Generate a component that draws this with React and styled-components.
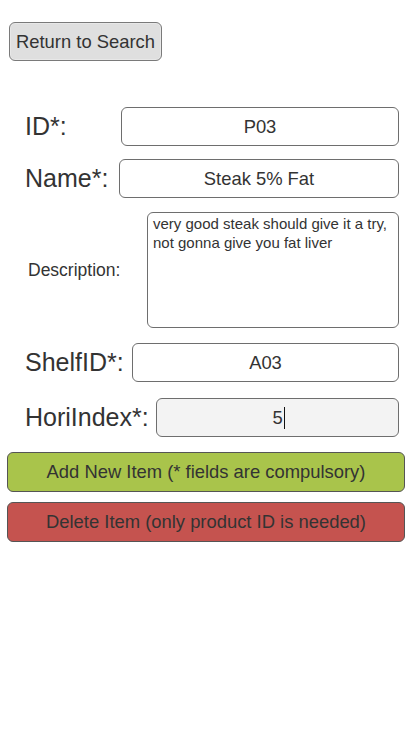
import React from "react";
import styled, { createGlobalStyle } from "styled-components";

const Global = createGlobalStyle`
  html, body { margin: 0; padding: 0; background: #ffffff; }
  body { font-family: "Liberation Sans", Arial, sans-serif; color: #333; }
`;

const Page = styled.div`
  width: 409px;
  min-height: 730px;
  display: flex;
  flex-direction: column;
  padding-top: 22px;
  box-sizing: border-box;
`;

const TopBar = styled.div`
  display: flex;
  padding-left: 9px;
`;

const ReturnButton = styled.button`
  height: 39px;
  width: 153px;
  padding: 0;
  font-family: "Liberation Sans", Arial, sans-serif;
  font-size: 18.4px;
  color: #333;
  background: #dfdfdf;
  border: 1px solid #7a7a7a;
  border-radius: 6px;
  box-shadow: inset 0 0 0 1px #e8e8e8;
`;

const Form = styled.div`
  display: flex;
  flex-direction: column;
  margin-top: 46px;
`;

const Row = styled.div`
  display: flex;
  align-items: center;
  padding-left: ${(p) => p.$indent || 25}px;
  padding-right: 10px;
  margin-top: ${(p) => p.$mt || 0}px;
`;

const Label = styled.label`
  flex: none;
  width: ${(p) => p.$w}px;
  font-size: ${(p) => (p.$small ? 17.5 : 25)}px;
  color: #333;
  white-space: nowrap;
`;

const FieldWrap = styled.div`
  flex: 1;
  min-width: 0;
  display: flex;
  position: relative;
`;

const TextInput = styled.input`
  flex: 1;
  min-width: 0;
  height: 39px;
  box-sizing: border-box;
  border: 1px solid #6e6e6e;
  border-radius: 6px;
  background: ${(p) => (p.$focused ? "#f3f3f3" : "#ffffff")};
  font-family: "Liberation Sans", Arial, sans-serif;
  font-size: 18.4px;
  color: #333;
  text-align: center;
  outline: none;
  padding: 0 6px;
  caret-color: transparent;
`;

const Caret = styled.span`
  position: absolute;
  left: calc(50% + 6px);
  top: 9px;
  width: 1px;
  height: 22px;
  background: #111;
  pointer-events: none;
`;

const TextArea = styled.textarea`
  flex: 1;
  min-width: 0;
  height: 116px;
  box-sizing: border-box;
  border: 1px solid #6e6e6e;
  border-radius: 6px;
  background: #fff;
  font-family: "Liberation Sans", Arial, sans-serif;
  font-size: 15px;
  line-height: 19px;
  color: #333;
  padding: 1px 5px;
  resize: none;
  outline: none;
`;

const Actions = styled.div`
  display: flex;
  flex-direction: column;
  gap: 10px;
  padding: 0 4px 0 7px;
  margin-top: 15px;
`;

const ActionButton = styled.button`
  height: 40px;
  width: 100%;
  padding: 0;
  font-family: "Liberation Sans", Arial, sans-serif;
  font-size: 18.4px;
  color: #333;
  background: ${(p) => (p.$variant === "danger" ? "#c5534f" : "#a9c44b")};
  border: 1px solid #555;
  border-radius: 6px;
`;

export default function App() {
  return (
    <Page>
      <Global />
      <TopBar>
        <ReturnButton>Return to Search</ReturnButton>
      </TopBar>
      <Form>
        <Row>
          <Label $w={96}>ID*:</Label>
          <TextInput defaultValue="P03" />
        </Row>
        <Row $mt={13}>
          <Label $w={94}>Name*:</Label>
          <TextInput defaultValue="Steak 5% Fat" />
        </Row>
        <Row $mt={14} $indent={28}>
          <Label $w={119} $small>Description:</Label>
          <TextArea defaultValue={"very good steak should give it a try, not gonna give you fat liver"} />
        </Row>
        <Row $mt={15}>
          <Label $w={107}>ShelfID*:</Label>
          <TextInput defaultValue="A03" />
        </Row>
        <Row $mt={16}>
          <Label $w={131}>HoriIndex*:</Label>
          <FieldWrap>
            <TextInput defaultValue="5" $focused />
            <Caret />
          </FieldWrap>
        </Row>
      </Form>
      <Actions>
        <ActionButton>Add New Item (* fields are compulsory)</ActionButton>
        <ActionButton $variant="danger">Delete Item (only product ID is needed)</ActionButton>
      </Actions>
    </Page>
  );
}
